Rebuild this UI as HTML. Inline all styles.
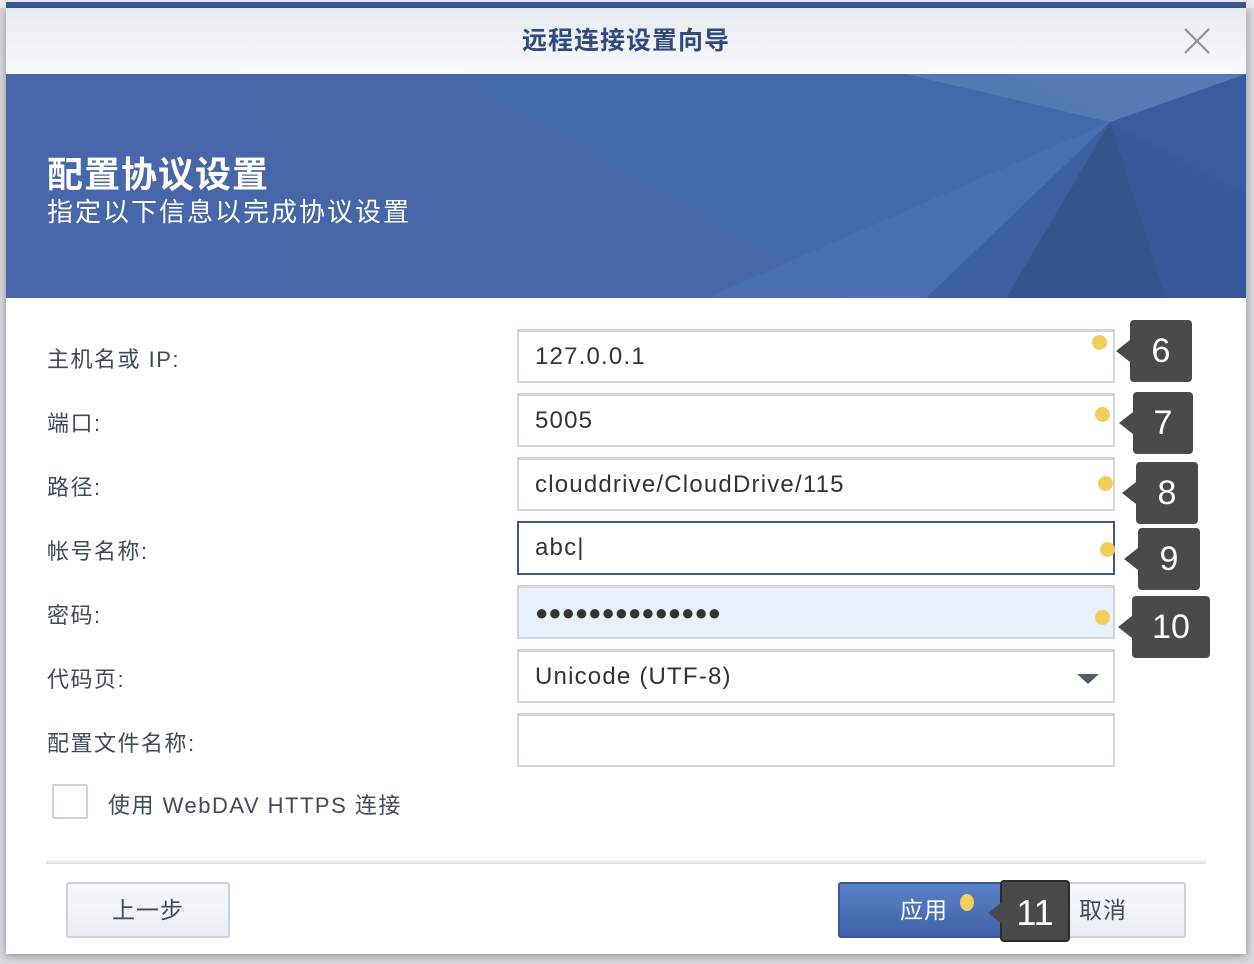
<!DOCTYPE html>
<html><head><meta charset="utf-8"><style>
*{box-sizing:border-box;margin:0;padding:0}
body{width:1254px;height:964px;background:#d8dadf;position:relative;overflow:hidden;font-family:"Liberation Sans","Noto Sans CJK SC",sans-serif}
.top{position:absolute;left:0;top:0;width:1254px;height:8px;background:#e8eaee}
.top i{position:absolute;left:6px;right:8px;top:2px;height:6px;background:#3d5a94}
.dlg{position:absolute;left:6px;top:8px;width:1240px;height:946px;background:#fff;box-shadow:0 2px 8px rgba(0,0,0,.35)}
.hdr{height:66px;background:linear-gradient(#e6e9f0,#f9fafc);text-align:center;font-size:25px;color:#2e4a7e;line-height:66px;position:relative;font-weight:bold;letter-spacing:1px}
.x{position:absolute;right:34px;top:18px;width:30px;height:30px}
.ban{position:absolute;top:66px;left:0;width:1240px;height:224px;background:#4767aa;overflow:hidden}
.ban h1{position:absolute;left:41px;top:72px;font-size:36px;color:#fff;font-weight:bold;letter-spacing:1px}
.ban p{position:absolute;left:41px;top:118px;font-size:26px;color:#fff;letter-spacing:2px}
.lbl{position:absolute;left:41px;font-size:22px;color:#404a58;letter-spacing:1.5px}
.inp{position:absolute;left:511px;width:598px;height:54px;border:2px solid #d0d5de;border-top-width:3px;background:#fff;font-size:24px;letter-spacing:1.2px;color:#333;padding-left:16px;line-height:50px}
.dot{position:absolute;width:15px;height:15px;border-radius:50%;background:#f2cf5b}
.tip{position:absolute;background:#4a4a4a;border-radius:4px;color:#fff;font-size:34px;text-align:center;line-height:62px;height:62px}
.tip:before{content:"";position:absolute;left:-14px;top:20px;border:11px solid transparent;border-right:14px solid #4a4a4a;border-left:0}
.btn{position:absolute;top:874px;height:56px;border:2px solid #ccd2dc;border-radius:3px;background:linear-gradient(#f7f9fc,#e9edf3);font-size:23px;color:#404a58;text-align:center;line-height:52px;letter-spacing:1px}
</style></head><body>
<div class="top"><i></i></div>
<div class="dlg">
<div class="hdr">远程连接设置向导
<svg class="x" viewBox="0 0 30 30"><path d="M3 3L27 27M27 3L3 27" stroke="#8d939c" stroke-width="2.2"/></svg></div>
<div class="ban">
<svg width="1240" height="224" style="position:absolute;left:0;top:0">
<polygon points="230,0 450,0 840,224 270,224" fill="#4666a8"/>
<polygon points="450,0 1000,0 1104,48 1080,224 840,224" fill="#4469ab"/>
<polygon points="900,0 1240,0 1240,40 1104,48" fill="#5a80b8" opacity=".75"/>
<polygon points="1104,48 1240,0 1240,224 1160,224" fill="#3a5c9e"/>
<polygon points="1104,48 1160,224 1240,224 1240,120" fill="#37589a"/>
<polygon points="700,224 1104,48 920,224" fill="#4a72b4" opacity=".7"/>
<polygon points="920,224 1104,48 1000,224" fill="#3c5fa2"/>
<polygon points="1000,224 1104,48 1160,224" fill="#34548f"/>
</svg>
<h1>配置协议设置</h1><p>指定以下信息以完成协议设置</p></div>
<div class="lbl" style="top:334px">主机名或 IP:</div>
<div class="lbl" style="top:398px">端口:</div>
<div class="lbl" style="top:462px">路径:</div>
<div class="lbl" style="top:526px">帐号名称:</div>
<div class="lbl" style="top:590px">密码:</div>
<div class="lbl" style="top:654px">代码页:</div>
<div class="lbl" style="top:718px">配置文件名称:</div>
<div class="inp" style="top:321px">127.0.0.1</div>
<div class="inp" style="top:385px">5005</div>
<div class="inp" style="top:449px">clouddrive/CloudDrive/115</div>
<div class="inp" style="top:513px;border-color:#3c5b94;border-width:2px">abc|</div>
<div class="inp" style="top:577px;background:#e8f0fc;letter-spacing:0;font-size:22px">●●●●●●●●●●●●●●</div>
<div class="inp" style="top:641px">Unicode (UTF-8)<svg style="position:absolute;right:14px;top:22px" width="22" height="10"><path d="M0 0H22L11 10Z" fill="#555d69"/></svg></div>
<div class="inp" style="top:705px"></div>
<div class="dot" style="left:1086px;top:327px"></div>
<div class="dot" style="left:1089px;top:399px"></div>
<div class="dot" style="left:1092px;top:468px"></div>
<div class="dot" style="left:1094px;top:534px"></div>
<div class="dot" style="left:1089px;top:602px"></div>
<div class="tip" style="left:1124px;top:312px;width:62px">6</div>
<div class="tip" style="left:1127px;top:384px;width:60px">7</div>
<div class="tip" style="left:1130px;top:454px;width:62px">8</div>
<div class="tip" style="left:1132px;top:520px;width:62px">9</div>
<div class="tip" style="left:1126px;top:588px;width:78px">10</div>
<div style="position:absolute;left:46px;top:776px;width:36px;height:35px;border:2px solid #ccd2dc;border-radius:2px"></div>
<div class="lbl" style="left:102px;top:780px">使用 WebDAV HTTPS 连接</div>
<div style="position:absolute;left:40px;top:852px;width:1160px;height:4px;background:linear-gradient(#f6f6f6,#dcdcdc)"></div>
<div class="btn" style="left:60px;width:164px">上一步</div>
<div class="btn" style="left:1012px;width:168px;padding-left:2px">取消</div>
<div class="btn" style="left:832px;width:166px;background:linear-gradient(#5a82c6,#3f62a8);border-color:#3a5a9c;color:#fff;padding-left:6px">应用</div>
<div class="dot" style="left:954px;top:886px;width:14px;height:17px"></div>
<div class="tip" style="left:994px;top:872px;width:70px;height:62px;border:2px solid #2d2d2d;font-size:36px">11</div>
</div>
</body></html>
